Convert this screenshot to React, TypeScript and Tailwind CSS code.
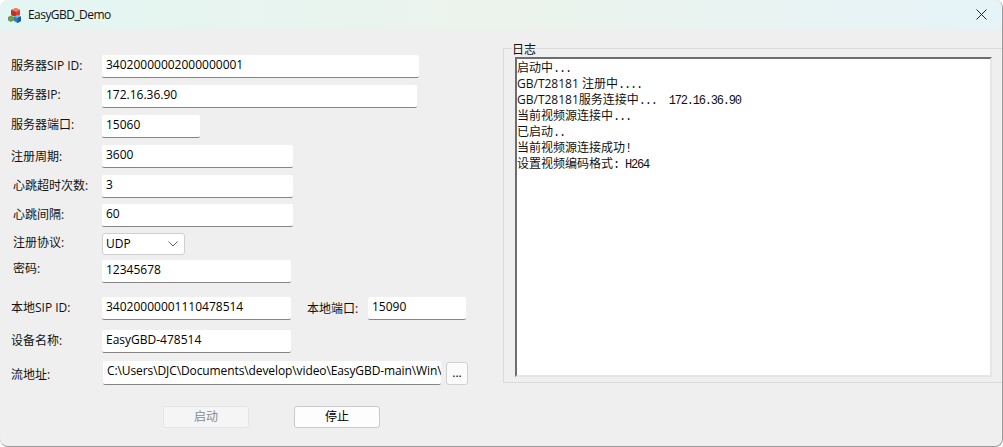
const cjk = "font-['Open_Sans','Noto_Sans_CJK_SC',sans-serif]";
const mono = "font-['Liberation_Mono',monospace] tracking-[-1.2px]";

function Field({ className, children }: { className: string; children: string }) {
  return (
    <div
      className={`flex h-[23px] shrink-0 items-center overflow-hidden whitespace-nowrap rounded-[2px] border-b border-[#858585] bg-white pb-[3px] pl-[4px] text-[12px] text-black ${className}`}
    >
      {children}
    </div>
  );
}

function Label({ className = "", children }: { className?: string; children: string }) {
  return <div className={`text-[12px] leading-[16px] text-[#111] ${className}`}>{children}</div>;
}

function Row({ className, label, labelClass = "pb-[2px]", children }: { className: string; label: string; labelClass?: string; children: React.ReactNode }) {
  return (
    <div className={`flex items-center ${className}`}>
      <div className="w-[91px] shrink-0">
        <Label className={labelClass}>{label}</Label>
      </div>
      {children}
    </div>
  );
}

function AppIcon() {
  return (
    <svg width="16" height="16" viewBox="0 0 16 16" className="shrink-0">
      <path d="M1 10l3-1.500 3 1.500v3.500l-3 1.500-3-1.500z" fill="#6f9a52" />
      <path d="M4 3l5-2 4 2v5l-4 2-5-2z" fill="#d9412f" />
      <path d="M4 3l5 2 4-2-4-2z" fill="#f0806c" />
      <path d="M9 5v5l-5-2V3z" fill="#c5301f" />
      <path d="M7 9.500l3.500-1.500 3.500 1.500v4.500l-3.500 2-3.500-2z" fill="#2f7fc1" />
      <path d="M7 9.500l3.500 1.500 3.500-1.500-3.500-1.500z" fill="#7db7e3" />
      <path d="M10.500 11v5l3.500-2V9.500z" fill="#1b5f9c" />
    </svg>
  );
}

// Log lines: the dots and numbers are monospaced in the reference, the rest is not.
const logLines: [string, string][] = [
  ["启动中", "..."],
  ["GB/T28181 注册中", "...."],
  ["GB/T28181服务连接中", "...  172.16.36.90"],
  ["当前视频源连接中", "..."],
  ["已启动", ".."],
  ["当前视频源连接成功", "!"],
  ["设置视频编码格式", ": H264"],
];

export default function App() {
  return (
    <div className="h-[447px] w-[1003px] bg-white">
      <div className={`flex h-full w-full flex-col overflow-hidden rounded-[8px] border-r border-b border-[#9c9c9c] bg-[#efefef] ${cjk}`}>
        {/* title bar */}
        <div className="flex h-[29px] shrink-0 items-center bg-gradient-to-r from-[#e3f6f3] via-[#ecf3ec] to-[#e6f3f8] pl-[7px] pr-[15px]">
          <AppIcon />
          <span className="ml-[5px] font-['Open_Sans',sans-serif] text-[12px] tracking-[-0.55px] text-[#111]">EasyGBD_Demo</span>
          <svg width="11" height="11" viewBox="0 0 11 11" className="ml-auto" stroke="#222" strokeWidth="1" fill="none">
            <path d="M0.500 0.500l10 10M10.500 0.500l-10 10" />
          </svg>
        </div>

        <div className="flex min-h-0 flex-1">
          {/* settings form */}
          <div className="flex w-[503px] shrink-0 flex-col pl-[11px] pt-[26px]">
            <Row label="服务器SIP ID:" className="">
              <Field className="w-[317px]">34020000002000000001</Field>
            </Row>
            <Row label="服务器IP:" labelClass="pb-[4px]" className="mt-[7px]">
              <Field className="w-[315px]">172.16.36.90</Field>
            </Row>
            <Row label="服务器端口:" labelClass="pb-[4px]" className="mt-[7px]">
              <Field className="w-[98px]">15060</Field>
            </Row>
            <Row label="注册周期:" labelClass="" className="mt-[7px]">
              <Field className="w-[191px]">3600</Field>
            </Row>
            <Row label="心跳超时次数:" labelClass="pb-[2px] pl-[2px]" className="mt-[7px]">
              <Field className="w-[191px]">3</Field>
            </Row>
            <Row label="心跳间隔:" labelClass="pb-[2px] pl-[2px]" className="mt-[6px]">
              <Field className="w-[191px]">60</Field>
            </Row>
            <Row label="注册协议:" labelClass="pb-[2px] pl-[2px]" className="mt-[6px]">
              <div className="flex h-[22px] w-[83px] items-center justify-between rounded-[3px] border border-[#cfcfcf] bg-white pl-[3px] pr-[6px] text-[12px] text-black">
                <span>UDP</span>
                <svg width="10" height="6" viewBox="0 0 10 6" fill="none" stroke="#666" strokeWidth="1">
                  <path d="M0.500 0.500L5 5l4.500-4.500" />
                </svg>
              </div>
            </Row>
            <Row label="密码:" labelClass="pl-[2px] -mt-[6px]" className="mt-[5px]">
              <Field className="w-[189px]">12345678</Field>
            </Row>
            <div className="mt-[14px] flex items-center">
              <Row label="本地SIP ID:" className="">
                <Field className="w-[189px]">34020000001110478514</Field>
              </Row>
              <div className="ml-[16px] w-[61px]">
                <Label>本地端口:</Label>
              </div>
              <Field className="w-[98px]">15090</Field>
            </div>
            <Row label="设备名称:" className="mt-[10px]">
              <Field className="w-[189px]">EasyGBD-478514</Field>
            </Row>
            <Row label="流地址:" labelClass="pt-[4px]" className="mt-[8px]">
              <Field className="ml-[1px] h-[24px] w-[338px] tracking-[-0.1px]">{"C:\\Users\\DJC\\Documents\\develop\\video\\EasyGBD-main\\Win\\"}</Field>
              <div className="ml-[5px] flex h-[23px] w-[22px] items-center justify-center rounded-[3px] border border-[#d0d0d0] bg-[#fbfbfb] text-[12px] text-black">...</div>
            </Row>
            <div className="mt-[21px] flex pl-[152px]">
              <div className="flex h-[22px] w-[86px] items-center justify-center rounded-[3px] border border-[#e4e4e4] bg-[#f5f5f5] text-[12px] text-[#8a8a8a]">启动</div>
              <div className="ml-[45px] flex h-[22px] w-[86px] items-center justify-center rounded-[3px] border border-[#cacaca] bg-[#fdfdfd] text-[12px] text-black">停止</div>
            </div>
          </div>

          {/* log panel */}
          <div className="pt-[11px]">
            <fieldset className="h-[343px] w-[495px] border border-[#dadada] px-[11px]">
              <legend className="ml-[-3px] px-0 pt-[4px] text-[12px] leading-[12px] text-[#111]">日志</legend>
              <div className="mt-[1px] h-[320px] w-[477px] border-t-2 border-r-2 border-b-2 border-l-2 border-t-[#6e6e6e] border-r-[#e6e6e6] border-b-[#e6e6e6] border-l-[#6e6e6e] bg-white pt-[1px]">
                {logLines.map(([text, rest]) => (
                  <div key={text} className="h-[16px] whitespace-pre text-[12px] leading-[16px] text-[#111]">
                    {text}
                    <span className={mono}>{rest}</span>
                  </div>
                ))}
              </div>
            </fieldset>
          </div>
        </div>
      </div>
    </div>
  );
}
